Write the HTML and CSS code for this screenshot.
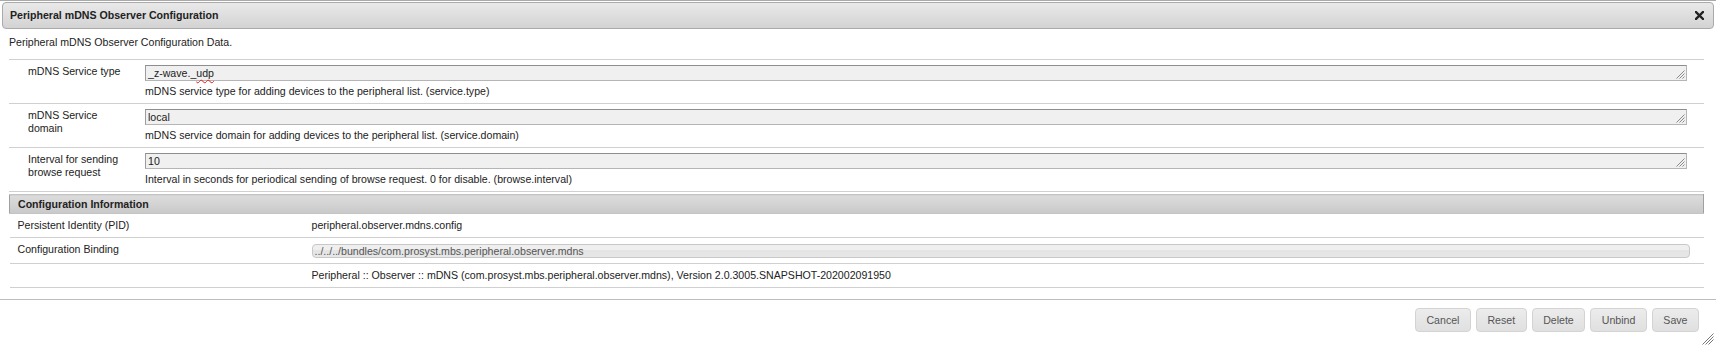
FILE: index.html
```html
<!DOCTYPE html>
<html lang="en">
<head>
    <meta charset="UTF-8">
    <title>Peripheral mDNS Observer Configuration</title>
    <link rel="stylesheet" href="styles.css">
</head>
<body>
    <div class="dialog">
        <!-- Title bar -->
        <div class="titlebar">
            <span class="title">Peripheral mDNS Observer Configuration</span>
            <svg class="close" width="9" height="9" viewBox="0 0 9 9">
                <path d="M1 1 L8 8 M8 1 L1 8" stroke="#222" stroke-width="2.4" stroke-linecap="square"/>
            </svg>
        </div>

        <div class="content">
            <p class="intro">Peripheral mDNS Observer Configuration Data.</p>

            <table class="props">
                <tr>
                    <td class="name">mDNS Service type</td>
                    <td class="field">
                        <div class="textbox">_z-wave._<span class="misspelt">udp</span>
                            <svg class="grip" width="10" height="10" viewBox="0 0 10 10">
                                <path d="M9.5 1.5 L1.5 9.5 M9.5 4.5 L4.5 9.5 M9.5 7.5 L7.5 9.5" stroke="#8a8a8a" stroke-width="1"/>
                            </svg>
                        </div>
                        <div class="hint">mDNS service type for adding devices to the peripheral list. (service.type)</div>
                    </td>
                </tr>
                <tr>
                    <td class="name">mDNS Service domain</td>
                    <td class="field">
                        <div class="textbox">local
                            <svg class="grip" width="10" height="10" viewBox="0 0 10 10">
                                <path d="M9.5 1.5 L1.5 9.5 M9.5 4.5 L4.5 9.5 M9.5 7.5 L7.5 9.5" stroke="#8a8a8a" stroke-width="1"/>
                            </svg>
                        </div>
                        <div class="hint">mDNS service domain for adding devices to the peripheral list. (service.domain)</div>
                    </td>
                </tr>
                <tr>
                    <td class="name">Interval for sending browse request</td>
                    <td class="field">
                        <div class="textbox">10
                            <svg class="grip" width="10" height="10" viewBox="0 0 10 10">
                                <path d="M9.5 1.5 L1.5 9.5 M9.5 4.5 L4.5 9.5 M9.5 7.5 L7.5 9.5" stroke="#8a8a8a" stroke-width="1"/>
                            </svg>
                        </div>
                        <div class="hint">Interval in seconds for periodical sending of browse request. 0 for disable. (browse.interval)</div>
                    </td>
                </tr>
            </table>

            <table class="info">
                <tr>
                    <th colspan="2">Configuration Information</th>
                </tr>
                <tr>
                    <td class="key">Persistent Identity (PID)</td>
                    <td>peripheral.observer.mdns.config</td>
                </tr>
                <tr>
                    <td class="key">Configuration Binding</td>
                    <td><div class="binding">../../../bundles/com.prosyst.mbs.peripheral.observer.mdns</div></td>
                </tr>
                <tr>
                    <td class="key"></td>
                    <td>Peripheral :: Observer :: mDNS (com.prosyst.mbs.peripheral.observer.mdns), Version 2.0.3005.SNAPSHOT-202002091950</td>
                </tr>
            </table>
        </div>

        <div class="buttons">
            <button class="btn">Cancel</button>
            <button class="btn">Reset</button>
            <button class="btn">Delete</button>
            <button class="btn">Unbind</button>
            <button class="btn">Save</button>
        </div>

        <svg class="resizer" width="12" height="12" viewBox="0 0 12 12">
            <path d="M11.5 0.5 L0.5 11.5 M11.5 3.5 L3.5 11.5 M11.5 6.5 L6.5 11.5" stroke="#777" stroke-width="1"/>
        </svg>
    </div>
</body>
</html>
```

FILE: styles.css
```css
:root {
    --text-color: #222;
    --line-color: #d0d0d0;
    --border-color: #aaa;
}

body {
    font-family: "Liberation Sans", Arial, sans-serif;
    font-size: 10.6px;
    line-height: 13px;
    margin: 0;
    padding: 0;
    background-color: #fff;
    color: var(--text-color);
}

.dialog {
    position: relative;
    height: 346px;
    border-top: 1px solid var(--border-color);
    padding-top: 1px;
    box-sizing: border-box;
}

/* Title bar */
.titlebar {
    height: 27px;
    margin: 0 2px;
    box-sizing: border-box;
    border: 1px solid var(--border-color);
    border-radius: 4px;
    background: linear-gradient(#e9e9e9, #d3d3d3);
    display: flex;
    align-items: center;
    justify-content: space-between;
    padding: 0 9px 0 7px;
}

.title {
    font-weight: bold;
}

.close {
    display: block;
}

/* Content */
.content {
    padding: 7px 12px 11px 9px;
}

.intro {
    margin: 0 0 10px;
}

.props,
.info {
    width: 100%;
    border-collapse: collapse;
}

.props td {
    border-top: 1px solid var(--line-color);
    border-bottom: 1px solid var(--line-color);
    vertical-align: top;
    padding: 5px 0 5px;
}

.props .name {
    width: 100px;
    padding-left: 19px;
    padding-right: 17px;
}

.props .field {
    padding-right: 17px;
}

.textbox {
    position: relative;
    height: 16px;
    box-sizing: border-box;
    border: 1px solid #b5b5b5;
    border-top-color: #8e8e8e;
    border-left-color: #9c9c9c;
    background-color: #f0f0f0;
    padding: 0 2px;
    line-height: 14px;
    white-space: nowrap;
}

.misspelt {
    text-decoration: underline wavy #e02020;
    text-decoration-thickness: 1px;
    text-underline-offset: 2px;
}

.grip {
    position: absolute;
    right: 1px;
    bottom: 1px;
}

.hint {
    margin-top: 4px;
}

/* Configuration information */
.info {
    margin-top: 2px;
}

.info th {
    text-align: left;
    font-weight: bold;
    height: 19px;
    box-sizing: border-box;
    padding: 0 8px;
    border: 1px solid #c4c4c4;
    border-left-color: #a0a0a0;
    border-right-color: #a0a0a0;
    background: linear-gradient(#dcdcdc, #c9c9c9);
}

.info td {
    border-bottom: 1px solid var(--line-color);
    padding: 5px 8px;
    vertical-align: top;
}

.info td:first-child {
    width: 286px;
}

.info td:last-child {
    padding-left: 0;
    padding-right: 14px;
}

.binding {
    height: 14px;
    box-sizing: border-box;
    border: 1px solid #c8c8c8;
    border-radius: 4px;
    background: linear-gradient(#efefef 0, #efefef 45%, #e4e4e4 45%, #e7e7e7 100%);
    color: #555;
    padding: 0 2px;
    line-height: 12px;
    margin: 1px 0 0;
}

/* Buttons */
.buttons {
    border-top: 1px solid #bdbdbd;
    padding: 8px 17px 0 0;
    display: flex;
    justify-content: flex-end;
    gap: 5px;
}

.btn {
    font-family: inherit;
    font-size: 10.6px;
    color: #555;
    height: 24px;
    padding: 0 10.5px;
    border: 1px solid #d3d3d3;
    border-radius: 4px;
    background: linear-gradient(#ececec, #e0e0e0);
    cursor: pointer;
}

.resizer {
    position: absolute;
    right: 2px;
    bottom: 1px;
}
```
